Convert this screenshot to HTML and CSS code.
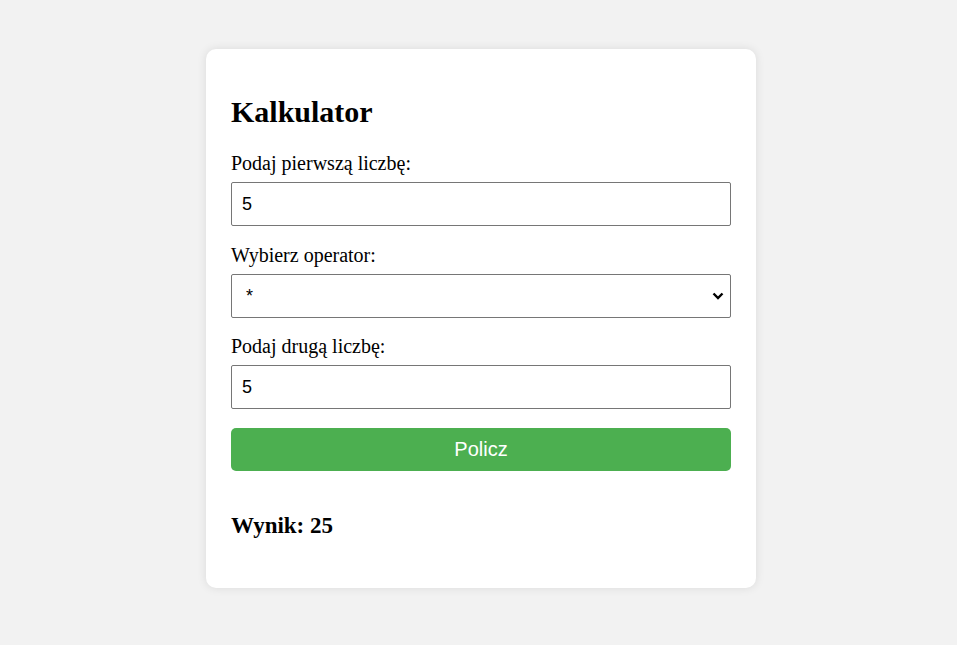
FILE: index.html
```html
<!DOCTYPE html>
<html lang="pl">
<head>
<meta charset="utf-8">
<title>Kalkulator</title>
<link rel="stylesheet" href="styles.css">
</head>
<body>
<div class="page">
  <div class="card">
    <h1 class="title">Kalkulator</h1>
    <form class="form">
      <label class="label" for="a">Podaj pierwszą liczbę:</label>
      <input class="field" id="a" type="number" value="5">
      <label class="label" for="op">Wybierz operator:</label>
      <select class="field select" id="op">
        <option>+</option>
        <option>-</option>
        <option selected>*</option>
        <option>/</option>
      </select>
      <label class="label" for="b">Podaj drugą liczbę:</label>
      <input class="field" id="b" type="number" value="5">
      <button class="button" type="button">Policz</button>
    </form>
    <h2 class="result">Wynik: 25</h2>
  </div>
</div>
</body>
</html>
```

FILE: styles.css
```css
html, body {
  margin: 0;
  padding: 0;
  background: #f2f2f2;
  font-family: "Liberation Serif", "Times New Roman", serif;
  color: #000;
}

.page {
  display: flex;
  justify-content: center;
  padding: 49px 0 0 5px;
  min-height: 645px;
  box-sizing: border-box;
}

.card {
  width: 550px;
  box-sizing: border-box;
  padding: 25px;
  background: #fff;
  border-radius: 10px;
  box-shadow: 0 0 10px rgba(0, 0, 0, 0.1);
  align-self: flex-start;
}

.title {
  font-size: 30px;
  font-weight: bold;
  line-height: 34px;
  margin: 21px 0 23px;
}

.form {
  display: flex;
  flex-direction: column;
}

.label {
  font-size: 20px;
  line-height: 23px;
  margin-bottom: 7px;
}

.field {
  height: 44px;
  box-sizing: border-box;
  width: 100%;
  padding: 0 10px;
  margin: 0 0 17.5px;
  border: 1px solid #767676;
  border-radius: 2px;
  background: #fff;
  font-family: "Liberation Sans", Arial, sans-serif;
  font-size: 18px;
  color: #000;
}

.field::-webkit-inner-spin-button,
.field::-webkit-outer-spin-button {
  -webkit-appearance: none;
  margin: 0;
}

.field[type=number] {
  -moz-appearance: textfield;
}

.select {
  -webkit-appearance: none;
  appearance: none;
  padding: 0 30px 0 14px;
  background-color: #fff;
  background-image: url("data:image/svg+xml,%3Csvg xmlns='http://www.w3.org/2000/svg' width='12' height='8' viewBox='0 0 12 8'%3E%3Cpath d='M1.5 1.5 L6 6 L10.5 1.5' fill='none' stroke='%23000' stroke-width='2.4'/%3E%3C/svg%3E");
  background-repeat: no-repeat;
  background-position: right 6px center;
  background-size: 12px 8px;
}

.button {
  height: 43px;
  margin-top: 1.5px;
  border: none;
  border-radius: 5px;
  background: #4caf50;
  color: #fff;
  font-family: "Liberation Sans", Arial, sans-serif;
  font-size: 20px;
  cursor: pointer;
}

.result {
  font-size: 23px;
  font-weight: bold;
  line-height: 27px;
  margin: 41px 0 24px;
}
```
